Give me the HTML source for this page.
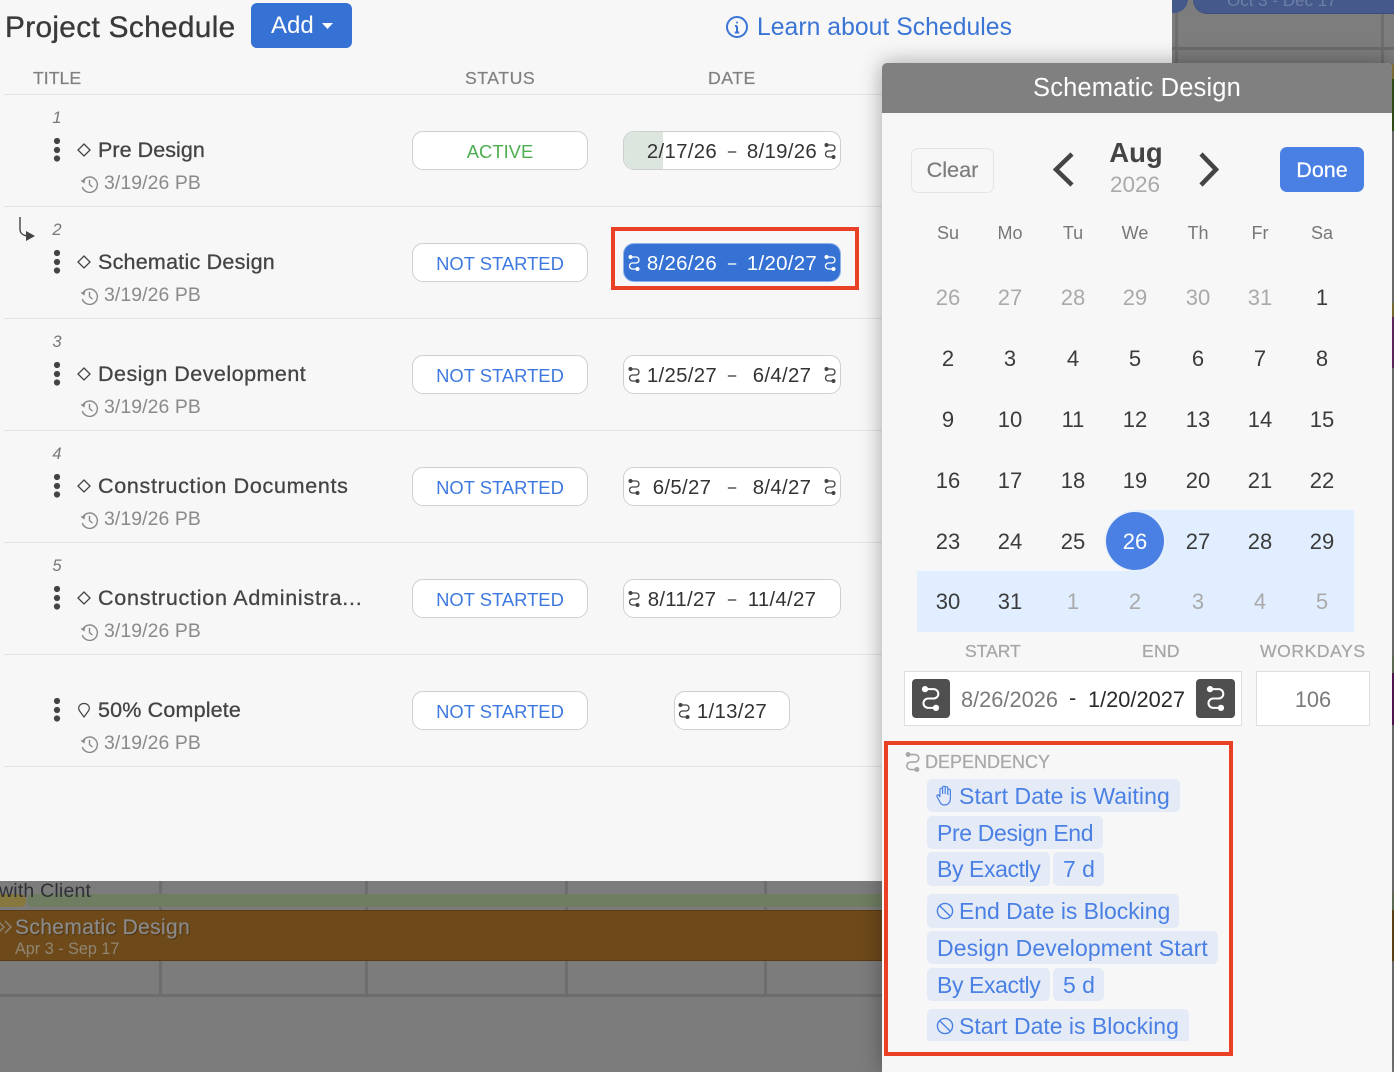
<!DOCTYPE html>
<html><head><meta charset="utf-8"><title>Project Schedule</title>
<style>
html,body{margin:0;padding:0;background:#7c7c7c;width:1394px;height:1072px;overflow:hidden}
#w{position:relative;width:1394px;height:1072px;overflow:hidden;font-family:"Liberation Sans",sans-serif;color:#444}
.a,.t{position:absolute}
.t{white-space:nowrap;line-height:30px;height:30px;margin-top:1px}
.c{text-align:center}
.sep{position:absolute;left:4px;width:880px;height:1px;background:#e3e3e3}
.pill{position:absolute;background:#fff;border:1px solid #cfcfcf;border-radius:11px;box-sizing:border-box;height:39px}
.s{font-size:18.4px;color:#3f79e0;left:412px;width:176px;text-align:center;margin-top:2px}
.d{font-size:20.4px;color:#333;width:100px;text-align:center;letter-spacing:.3px;margin-top:2px}
.dash{font-size:14.5px;-webkit-text-stroke:.3px currentColor;letter-spacing:0}
.ttl{font-size:21.5px;color:#444;left:98px;-webkit-text-stroke:.3px #444}
.sub{font-size:19.4px;color:#8a8a8a;left:104px;letter-spacing:.1px}
.num{font-size:16.5px;font-style:italic;color:#777;left:47px;width:20px;text-align:center}
.h{font-size:17.7px;color:#808080;-webkit-text-stroke:.2px #808080;margin-top:0}
.dw{font-size:18px;color:#777;width:60px;text-align:center}
.n{font-size:22px;color:#3b3b3b;width:60px;text-align:center}
.g{color:#aaa}
.chip{position:absolute;background:#e4ebf7;border-radius:5px}
.dp{font-size:23px;color:#4a80e4;margin-top:0}
.lb{font-size:17.5px;color:#a6a6a6;-webkit-text-stroke:.25px #a6a6a6}
svg{position:absolute;overflow:visible}
</style></head><body><div id="w">

<!-- background (gantt, dimmed) -->
<div class="a" style="left:1172px;top:0;width:222px;height:1072px;background:#7d7d7d"></div>
<div class="a" style="left:1175px;top:0;width:3px;height:63px;background:#6e6e6e"></div>
<div class="a" style="left:1381px;top:0;width:3px;height:63px;background:#6e6e6e"></div>
<div class="a" style="left:1172px;top:47px;width:222px;height:3px;background:#6b6b6b"></div>
<div class="a" style="left:1172px;top:-10px;width:16px;height:23px;background:#45598a;border-radius:0 0 14px 0"></div>
<div class="a" style="left:1193px;top:-10px;width:201px;height:23px;background:#45598a;border-radius:0 0 0 14px;border-bottom:1px solid #3a4d7a"></div>
<div class="t" style="left:1227px;top:-15px;font-size:17px;color:#6f7fa6">Oct 3 - Dec 17</div>

<div class="a" style="left:0;top:881px;width:882px;height:191px;background:#7c7c7c"></div>
<div class="a" style="left:159px;top:881px;width:3px;height:114px;background:#6d6d6d"></div>
<div class="a" style="left:365px;top:881px;width:3px;height:114px;background:#6d6d6d"></div>
<div class="a" style="left:565px;top:881px;width:3px;height:114px;background:#6d6d6d"></div>
<div class="a" style="left:764px;top:881px;width:3px;height:114px;background:#6d6d6d"></div>
<div class="a" style="left:0;top:994px;width:882px;height:3px;background:#6d6d6d"></div>
<div class="a" style="left:-5px;top:894px;width:31px;height:13px;background:#86783f;border-radius:5px"></div>
<div class="a" style="left:27px;top:894px;width:860px;height:13px;background:#6f7d60;border-radius:5px"></div>
<div class="t" style="left:-1px;top:875px;font-size:19.5px;color:#2e3135;letter-spacing:.2px">with Client</div>
<div class="a" style="left:0;top:910px;width:882px;height:51px;background:#6e4a1b;border-top:1px solid #5a3b12;border-bottom:1px solid #5a3b12;box-sizing:border-box"></div>
<svg style="left:0;top:920px" width="14" height="14" viewBox="0 0 14 14" fill="none" stroke="#8c8474" stroke-width="1.4"><path d="M-2 1l6 6-6 6M5 1l6 6-6 6"/></svg>
<div class="t" style="left:15px;top:912px;font-size:21px;letter-spacing:.37px;color:#8a8a8a;text-shadow:1px 1px 1px #4a3010;-webkit-text-stroke:.2px #8a8a8a">Schematic Design</div>
<div class="t" style="left:15px;top:933px;font-size:16.2px;color:#8f8672">Apr 3 - Sep 17</div>

<!-- right edge strip -->
<div class="a" style="left:1392px;top:64px;width:2px;height:15px;background:#8d7b3c"></div>
<div class="a" style="left:1392px;top:79px;width:2px;height:52px;background:#3c5a1c"></div>
<div class="a" style="left:1392px;top:303px;width:2px;height:14px;background:#8d7b3c"></div>
<div class="a" style="left:1392px;top:317px;width:2px;height:51px;background:#6e2e6e"></div>
<div class="a" style="left:1392px;top:656px;width:2px;height:17px;background:#6f7d60"></div>
<div class="a" style="left:1392px;top:673px;width:2px;height:52px;background:#5f1a5f"></div>
<div class="a" style="left:1392px;top:894px;width:2px;height:16px;background:#6f7d60"></div>
<div class="a" style="left:1392px;top:910px;width:2px;height:51px;background:#6e4a1b"></div>

<!-- left panel -->
<div class="a" style="left:0;top:0;width:1172px;height:881px;background:#f7f7f7"></div>
<div class="t" style="left:5px;top:12px;font-size:29.8px;letter-spacing:.33px;color:#3a3a3a;-webkit-text-stroke:.35px #3a3a3a">Project Schedule</div>
<div class="a" style="left:251px;top:3px;width:101px;height:45px;background:#3572d4;border-radius:6px"></div>
<div class="t" style="left:271px;top:10px;font-size:24px;color:#fff">Add</div>
<svg style="left:322px;top:23px" width="11" height="6" viewBox="0 0 11 6"><path d="M0 0h11L5.500 6z" fill="#fff"/></svg>
<svg style="left:726px;top:16px" width="22" height="22" viewBox="0 0 22 22" fill="none" stroke="#3a75d6" stroke-width="2"><circle cx="11" cy="11" r="10"/><path d="M11 10v6.500M8.800 16.500h4.400M9 10h2"/><circle cx="11" cy="6.500" r="1" fill="#3a75d6" stroke="none"/></svg>
<div class="t" style="left:757px;top:12px;font-size:24.7px;letter-spacing:.05px;color:#3a75d6">Learn about Schedules</div>

<div class="t h" style="left:33px;top:63px">TITLE</div>
<div class="t h" style="left:465px;top:63px;letter-spacing:.5px">STATUS</div>
<div class="t h" style="left:708px;top:63px;letter-spacing:.5px">DATE</div>

<div class="sep" style="top:94px"></div><div class="sep" style="top:206px"></div><div class="sep" style="top:318px"></div><div class="sep" style="top:430px"></div><div class="sep" style="top:542px"></div><div class="sep" style="top:654px"></div><div class="sep" style="top:766px"></div>

<svg width="0" height="0" style="position:absolute"><defs>
<symbol id="sw" viewBox="0 0 12 16"><path d="M3 2h5a3 3 0 0 1 0 6H4.500a3 3 0 0 0 0 6H9" fill="none" stroke="currentColor" stroke-width="1.300"/><circle cx="2.500" cy="2" r="2" fill="currentColor"/><circle cx="9.500" cy="14" r="2" fill="currentColor"/></symbol>
<symbol id="keb" viewBox="0 0 8 24"><circle cx="4" cy="3" r="3.100" fill="#444"/><circle cx="4" cy="12" r="3.100" fill="#444"/><circle cx="4" cy="20.500" r="3.100" fill="#444"/></symbol>
<symbol id="hist" viewBox="0 0 18 18"><path d="M3.200 5.500A7.700 7.700 0 1 1 2.300 12" fill="none" stroke="#8a8a8a" stroke-width="1.400"/><path d="M.5 5.500l3.800 3.300 1-4.500z" fill="#8a8a8a"/><path d="M9.500 4.800v4.700l3 2.500" fill="none" stroke="#8a8a8a" stroke-width="1.400"/></symbol>
<symbol id="dia" viewBox="0 0 14 14"><path d="M7 1l6 6-6 6-6-6z" fill="none" stroke="#444" stroke-width="1.300"/></symbol>
<symbol id="no" viewBox="0 0 18 18"><circle cx="9" cy="9" r="7.600" fill="none" stroke="#4a80e4" stroke-width="1.400"/><path d="M3.700 3.700l10.600 10.600" stroke="#4a80e4" stroke-width="1.400"/></symbol>
</defs></svg>

<!-- row arrow -->
<svg style="left:15px;top:215px" width="24" height="30" viewBox="0 0 24 30" fill="none"><path d="M5 2v12c0 4 2 6 7 7" stroke="#444" stroke-width="1.400"/><path d="M11 16l9 5-9 5z" fill="#444"/></svg>

<!-- Rows -->
<div class="t num" style="top:102px">1</div>
<svg style="left:53px;top:138px" width="8" height="24"><use href="#keb"/></svg>
<svg style="left:77px;top:143px" width="14" height="14"><use href="#dia"/></svg>
<div class="t ttl" style="top:134px;letter-spacing:.05px">Pre Design</div>
<svg style="left:80px;top:175px" width="18" height="18"><use href="#hist"/></svg>
<div class="t sub" style="top:167px">3/19/26 PB</div>
<div class="pill" style="left:412px;top:131px;width:176px"></div>
<div class="t s" style="top:135px;color:#4caf50">ACTIVE</div>
<div class="pill" style="left:623px;top:131px;width:218px;overflow:hidden"><div class="a" style="left:0;top:0;width:39px;height:37px;background:#dce6df"></div></div>
<div class="t d" style="left:632px;top:135px">2/17/26</div><div class="t d dash" style="left:682px;top:135px">–</div><div class="t d" style="left:732px;top:135px">8/19/26</div>
<svg style="left:824px;top:143px;color:#444" width="12" height="16"><use href="#sw"/></svg>

<div class="t num" style="top:214px">2</div>
<svg style="left:53px;top:250px" width="8" height="24"><use href="#keb"/></svg>
<svg style="left:77px;top:255px" width="14" height="14"><use href="#dia"/></svg>
<div class="t ttl" style="top:246px;letter-spacing:.23px">Schematic Design</div>
<svg style="left:80px;top:287px" width="18" height="18"><use href="#hist"/></svg>
<div class="t sub" style="top:279px">3/19/26 PB</div>
<div class="pill" style="left:412px;top:243px;width:176px"></div>
<div class="t s" style="top:247px">NOT STARTED</div>
<div class="pill" style="left:623px;top:243px;width:218px;background:#3572d4;border-color:#8fb2e8"></div>
<div class="t d" style="left:632px;top:247px;color:#fff">8/26/26</div><div class="t d dash" style="left:682px;top:247px;color:#fff">–</div><div class="t d" style="left:732px;top:247px;color:#fff">1/20/27</div>
<svg style="left:628px;top:255px;color:#fff" width="12" height="16"><use href="#sw"/></svg>
<svg style="left:824px;top:255px;color:#fff" width="12" height="16"><use href="#sw"/></svg>
<div class="a" style="left:611px;top:227px;width:248px;height:63px;border:4.500px solid #ea4126;box-sizing:border-box"></div>

<div class="t num" style="top:326px">3</div>
<svg style="left:53px;top:362px" width="8" height="24"><use href="#keb"/></svg>
<svg style="left:77px;top:367px" width="14" height="14"><use href="#dia"/></svg>
<div class="t ttl" style="top:358px;letter-spacing:.48px">Design Development</div>
<svg style="left:80px;top:399px" width="18" height="18"><use href="#hist"/></svg>
<div class="t sub" style="top:391px">3/19/26 PB</div>
<div class="pill" style="left:412px;top:355px;width:176px"></div>
<div class="t s" style="top:359px">NOT STARTED</div>
<div class="pill" style="left:623px;top:355px;width:218px"></div>
<div class="t d" style="left:632px;top:359px">1/25/27</div><div class="t d dash" style="left:682px;top:359px">–</div><div class="t d" style="left:732px;top:359px">6/4/27</div>
<svg style="left:628px;top:367px;color:#444" width="12" height="16"><use href="#sw"/></svg>
<svg style="left:824px;top:367px;color:#444" width="12" height="16"><use href="#sw"/></svg>

<div class="t num" style="top:438px">4</div>
<svg style="left:53px;top:474px" width="8" height="24"><use href="#keb"/></svg>
<svg style="left:77px;top:479px" width="14" height="14"><use href="#dia"/></svg>
<div class="t ttl" style="top:470px;letter-spacing:.69px">Construction Documents</div>
<svg style="left:80px;top:511px" width="18" height="18"><use href="#hist"/></svg>
<div class="t sub" style="top:503px">3/19/26 PB</div>
<div class="pill" style="left:412px;top:467px;width:176px"></div>
<div class="t s" style="top:471px">NOT STARTED</div>
<div class="pill" style="left:623px;top:467px;width:218px"></div>
<div class="t d" style="left:632px;top:471px">6/5/27</div><div class="t d dash" style="left:682px;top:471px">–</div><div class="t d" style="left:732px;top:471px">8/4/27</div>
<svg style="left:628px;top:479px;color:#444" width="12" height="16"><use href="#sw"/></svg>
<svg style="left:824px;top:479px;color:#444" width="12" height="16"><use href="#sw"/></svg>

<div class="t num" style="top:550px">5</div>
<svg style="left:53px;top:586px" width="8" height="24"><use href="#keb"/></svg>
<svg style="left:77px;top:591px" width="14" height="14"><use href="#dia"/></svg>
<div class="t ttl" style="top:582px;letter-spacing:.75px">Construction Administra...</div>
<svg style="left:80px;top:623px" width="18" height="18"><use href="#hist"/></svg>
<div class="t sub" style="top:615px">3/19/26 PB</div>
<div class="pill" style="left:412px;top:579px;width:176px"></div>
<div class="t s" style="top:583px">NOT STARTED</div>
<div class="pill" style="left:623px;top:579px;width:218px"></div>
<div class="t d" style="left:632px;top:583px">8/11/27</div><div class="t d dash" style="left:682px;top:583px">–</div><div class="t d" style="left:732px;top:583px">11/4/27</div>
<svg style="left:628px;top:591px;color:#444" width="12" height="16"><use href="#sw"/></svg>

<svg style="left:53px;top:698px" width="8" height="24"><use href="#keb"/></svg>
<svg style="left:77px;top:702px" width="14" height="16" viewBox="0 0 14 16"><path d="M7 15L2.300 8.500C.5 5 3 1.500 7 1.500s6.500 3.500 4.700 7z" fill="none" stroke="#444" stroke-width="1.200"/></svg>
<div class="t ttl" style="top:694px;letter-spacing:.17px">50% Complete</div>
<svg style="left:80px;top:735px" width="18" height="18"><use href="#hist"/></svg>
<div class="t sub" style="top:727px">3/19/26 PB</div>
<div class="pill" style="left:412px;top:691px;width:176px"></div>
<div class="t s" style="top:695px">NOT STARTED</div>
<div class="pill" style="left:674px;top:691px;width:116px"></div>
<div class="t d" style="left:682px;top:695px">1/13/27</div>
<svg style="left:678px;top:703px;color:#444" width="12" height="16"><use href="#sw"/></svg>

<!-- popup -->
<div class="a" style="left:882px;top:63px;width:510px;height:1009px;background:#f7f7f7;border-radius:5px 5px 0 0;box-shadow:0 0 22px rgba(0,0,0,.35)"></div>
<div class="a" style="left:882px;top:63px;width:510px;height:50px;background:#808080;border-radius:5px 5px 0 0"></div>
<div class="t c" style="left:882px;width:510px;top:72px;font-size:25.5px;letter-spacing:.15px;color:#fff">Schematic Design</div>

<div class="a" style="left:911px;top:148px;width:83px;height:45px;border:1px solid #e5e5e5;border-radius:7px;box-sizing:border-box"></div>
<div class="t c" style="left:911px;width:83px;top:154px;font-size:21.700px;color:#7c7c7c;-webkit-text-stroke:.2px #7c7c7c">Clear</div>
<svg style="left:1048px;top:148px" width="30" height="44" fill="none" stroke="#444" stroke-width="4.500"><path d="M24 6L8 21.500 24 37"/></svg>
<svg style="left:1195px;top:148px" width="30" height="44" fill="none" stroke="#444" stroke-width="4.500"><path d="M6 6l15 15.500L6 37"/></svg>
<div class="t c" style="left:1086px;width:100px;top:137px;font-size:27.500px;font-weight:700;color:#444">Aug</div>
<div class="t c" style="left:1085px;width:100px;top:169px;font-size:22.500px;color:#aaa">2026</div>
<div class="a" style="left:1280px;top:147px;width:84px;height:45px;background:#4a80e4;border-radius:7px"></div>
<div class="t c" style="left:1280px;width:84px;top:154px;font-size:21.500px;color:#fff;-webkit-text-stroke:.2px #fff">Done</div>

<div class="t dw" style="left:918px;top:217px">Su</div><div class="t dw" style="left:980px;top:217px">Mo</div><div class="t dw" style="left:1043px;top:217px">Tu</div><div class="t dw" style="left:1105px;top:217px">We</div><div class="t dw" style="left:1168px;top:217px">Th</div><div class="t dw" style="left:1230px;top:217px">Fr</div><div class="t dw" style="left:1292px;top:217px">Sa</div>

<div class="a" style="left:1135px;top:510px;width:219px;height:61px;background:#e0eeff"></div>
<div class="a" style="left:917px;top:571px;width:437px;height:61px;background:#e0eeff"></div>
<div class="a" style="left:1106px;top:512px;width:58px;height:58px;background:#4a80e4;border-radius:50%;box-shadow:0 0 0 1.500px #e8f0fb"></div>

<div class="t n g" style="left:918px;top:282px">26</div><div class="t n g" style="left:980px;top:282px">27</div><div class="t n g" style="left:1043px;top:282px">28</div><div class="t n g" style="left:1105px;top:282px">29</div><div class="t n g" style="left:1168px;top:282px">30</div><div class="t n g" style="left:1230px;top:282px">31</div><div class="t n" style="left:1292px;top:282px">1</div>
<div class="t n" style="left:918px;top:343px">2</div><div class="t n" style="left:980px;top:343px">3</div><div class="t n" style="left:1043px;top:343px">4</div><div class="t n" style="left:1105px;top:343px">5</div><div class="t n" style="left:1168px;top:343px">6</div><div class="t n" style="left:1230px;top:343px">7</div><div class="t n" style="left:1292px;top:343px">8</div>
<div class="t n" style="left:918px;top:404px">9</div><div class="t n" style="left:980px;top:404px">10</div><div class="t n" style="left:1043px;top:404px">11</div><div class="t n" style="left:1105px;top:404px">12</div><div class="t n" style="left:1168px;top:404px">13</div><div class="t n" style="left:1230px;top:404px">14</div><div class="t n" style="left:1292px;top:404px">15</div>
<div class="t n" style="left:918px;top:465px">16</div><div class="t n" style="left:980px;top:465px">17</div><div class="t n" style="left:1043px;top:465px">18</div><div class="t n" style="left:1105px;top:465px">19</div><div class="t n" style="left:1168px;top:465px">20</div><div class="t n" style="left:1230px;top:465px">21</div><div class="t n" style="left:1292px;top:465px">22</div>
<div class="t n" style="left:918px;top:526px">23</div><div class="t n" style="left:980px;top:526px">24</div><div class="t n" style="left:1043px;top:526px">25</div><div class="t n" style="left:1105px;top:526px;color:#fff">26</div><div class="t n" style="left:1168px;top:526px">27</div><div class="t n" style="left:1230px;top:526px">28</div><div class="t n" style="left:1292px;top:526px">29</div>
<div class="t n" style="left:918px;top:586px">30</div><div class="t n" style="left:980px;top:586px">31</div><div class="t n g" style="left:1043px;top:586px">1</div><div class="t n g" style="left:1105px;top:586px">2</div><div class="t n g" style="left:1168px;top:586px">3</div><div class="t n g" style="left:1230px;top:586px">4</div><div class="t n g" style="left:1292px;top:586px">5</div>

<div class="t lb" style="left:965px;top:635px">START</div>
<div class="t lb" style="left:1142px;top:635px;letter-spacing:.3px">END</div>
<div class="t lb" style="left:1260px;top:635px;letter-spacing:.6px">WORKDAYS</div>

<div class="a" style="left:904px;top:671px;width:338px;height:55px;background:#fff;border:1.500px solid #dedede;box-sizing:border-box"></div>
<div class="a" style="left:912px;top:679px;width:38px;height:39px;background:#4f4f4f;border-radius:4px"></div>
<svg style="left:921px;top:686px;color:#fff" width="19" height="25"><use href="#sw"/></svg>
<div class="t" style="left:961px;top:684px;font-size:21.800px;color:#7a7a7a">8/26/2026</div>
<div class="t" style="left:1069px;top:682px;font-size:21.800px;color:#333">-</div>
<div class="t" style="left:1088px;top:684px;font-size:21.800px;color:#2a2a2a">1/20/2027</div>
<div class="a" style="left:1196px;top:679px;width:39px;height:39px;background:#4f4f4f;border-radius:4px"></div>
<svg style="left:1206px;top:686px;color:#fff" width="19" height="25"><use href="#sw"/></svg>
<div class="a" style="left:1256px;top:671px;width:114px;height:55px;background:#fff;border:1.500px solid #dedede;box-sizing:border-box"></div>
<div class="t c" style="left:1256px;width:114px;top:684px;font-size:21.800px;color:#7a7a7a">106</div>

<!-- dependency -->
<svg style="left:905px;top:752px;color:#a8a8a8" width="15" height="20"><use href="#sw"/></svg>
<div class="t" style="left:925px;top:746px;font-size:18px;color:#a8a8a8;-webkit-text-stroke:.25px #a8a8a8">DEPENDENCY</div>

<div class="chip" style="left:927px;top:779px;width:253px;height:33px"></div>
<svg style="left:936px;top:785px" width="18" height="22" viewBox="0 0 18 22" fill="none" stroke="#4a80e4" stroke-width="1.200"><path d="M4 12V4.500a1.300 1.300 0 0 1 2.600 0V9M6.600 9V2.500a1.300 1.300 0 0 1 2.600 0V9M9.200 9V3a1.300 1.300 0 0 1 2.600 0V10M11.800 10V5.500a1.300 1.300 0 0 1 2.600 0V13c0 4-2 7-6 7-3 0-4-1.500-5-4L1 11.500c-.6-1.500 1.500-2.500 2.300-1L4 12"/></svg>
<div class="t dp" style="left:959px;top:781px;letter-spacing:.1px">Start Date is Waiting</div>
<div class="chip" style="left:927px;top:816px;width:176px;height:33px"></div>
<div class="t dp" style="left:937px;top:818px;letter-spacing:-.35px">Pre Design End</div>
<div class="chip" style="left:927px;top:852px;width:123px;height:34px"></div>
<div class="t dp" style="left:937px;top:854px;letter-spacing:-.4px">By Exactly</div>
<div class="chip" style="left:1053px;top:852px;width:51px;height:34px"></div>
<div class="t dp" style="left:1063px;top:854px">7 d</div>

<div class="chip" style="left:927px;top:894px;width:252px;height:34px"></div>
<svg style="left:936px;top:902px" width="18" height="18"><use href="#no"/></svg>
<div class="t dp" style="left:959px;top:896px;letter-spacing:-.05px">End Date is Blocking</div>
<div class="chip" style="left:927px;top:931px;width:291px;height:33px"></div>
<div class="t dp" style="left:937px;top:933px;letter-spacing:.1px">Design Development Start</div>
<div class="chip" style="left:927px;top:968px;width:123px;height:33px"></div>
<div class="t dp" style="left:937px;top:970px;letter-spacing:-.4px">By Exactly</div>
<div class="chip" style="left:1053px;top:968px;width:51px;height:33px"></div>
<div class="t dp" style="left:1063px;top:970px">5 d</div>

<div class="chip" style="left:927px;top:1009px;width:262px;height:32px;border-radius:5px 5px 0 0"></div>
<svg style="left:936px;top:1017px" width="18" height="18"><use href="#no"/></svg>
<div class="t dp" style="left:959px;top:1011px">Start Date is Blocking</div>

<div class="a" style="left:884px;top:741px;width:349px;height:315px;border:4.500px solid #ea4126;box-sizing:border-box"></div>

</div></body></html>
